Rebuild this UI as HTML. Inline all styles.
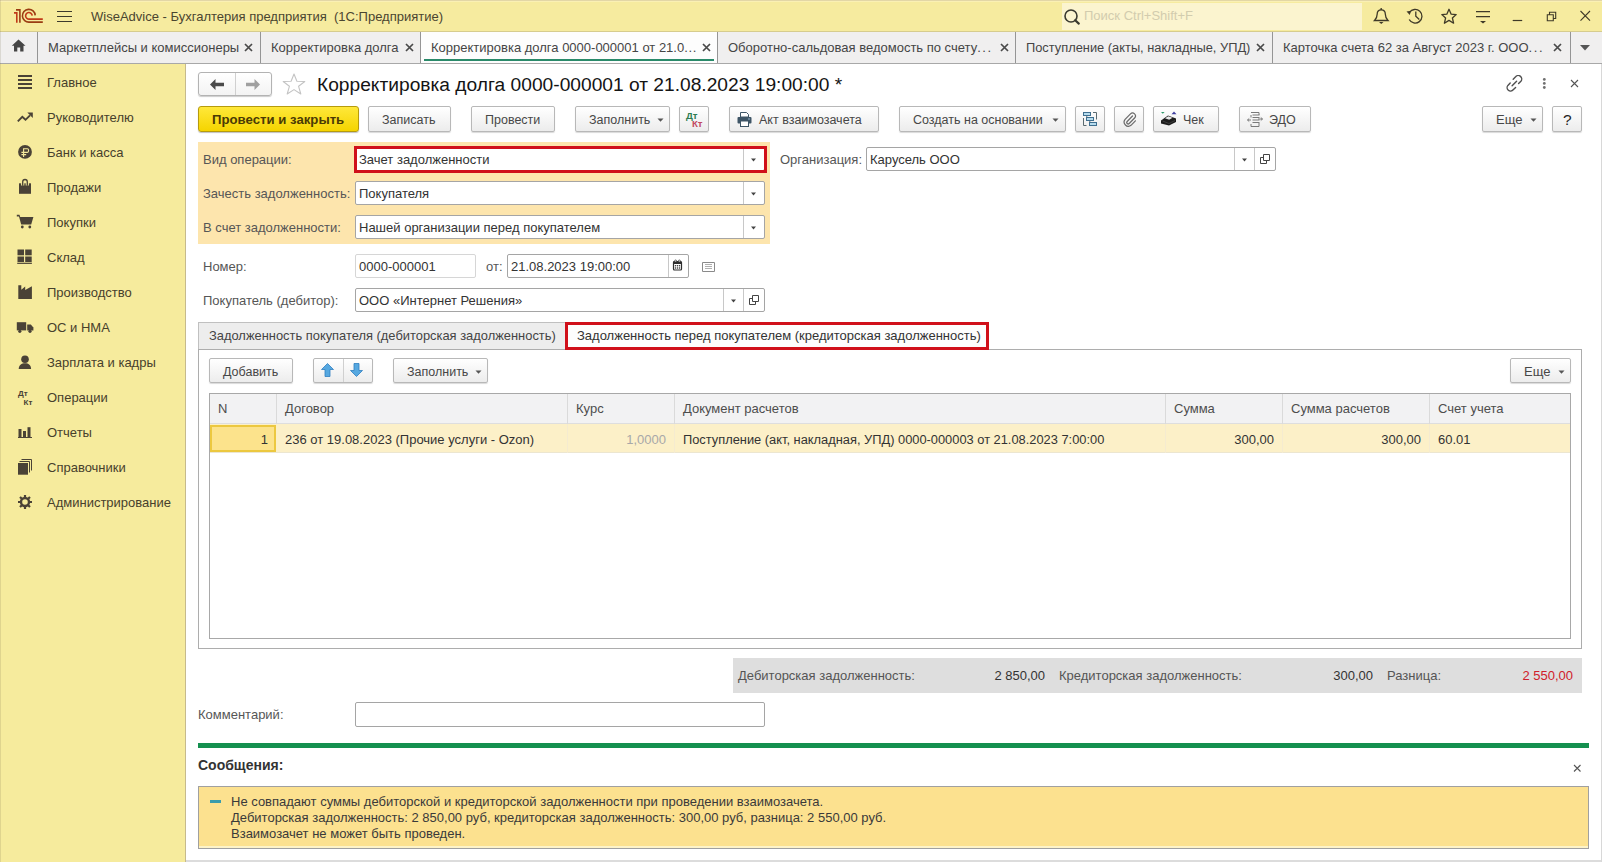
<!DOCTYPE html>
<html><head><meta charset="utf-8">
<style>
*{box-sizing:border-box;margin:0;padding:0}
html,body{width:1602px;height:862px;overflow:hidden;background:#fff;font-family:"Liberation Sans",sans-serif;font-size:13px;color:#4d4d4d}
.a{position:absolute}
.t{position:absolute;white-space:pre;line-height:16px}
#top{left:0;top:0;width:1602px;height:32px;background:#f6eb9f;border-bottom:1px solid #d6cc8e}
#tabs{left:0;top:32px;width:1602px;height:32px;background:#f0efef;border-bottom:1px solid #a8a8a8}
.tab{position:absolute;top:0;height:31px;border-right:1px solid #959595}
.tab .t{top:8px;color:#454545}
.tab .x{position:absolute;top:8px;font-size:14px;color:#555;font-weight:bold}
#side{left:0;top:64px;width:186px;height:798px;background:#f6eb9d;border-right:1px solid #c6ba8c}
.si{position:absolute;left:47px;color:#47402c}
#main{left:186px;top:64px;width:1416px;height:798px;background:#fff}
.btn{position:absolute;height:25px;border:1px solid #b8b8b8;border-radius:2px;background:linear-gradient(#ffffff,#ececec);box-shadow:0 1px 1px rgba(0,0,0,.15)}
.btn .t{top:5px;color:#474747;font-size:12.5px}
.fld{position:absolute;height:24px;border:1px solid #a5a5a5;border-radius:2px;background:#fff}
.fld .t{top:4px;left:3px;color:#333}
.dd{position:absolute;top:0;width:1px;height:22px;background:#c8c8c8}
.lbl{position:absolute;white-space:pre;color:#565656;line-height:16px}
</style></head><body>
<!-- TOP BAR -->
<div id="top" class="a">
  <svg class="a" style="left:0;top:0" width="50" height="31" viewBox="0 0 50 31">
    <g fill="none" stroke-width="1.6" stroke-linecap="butt">
      <path d="M14 12.9 H16.8 V22.8" stroke="#c03a18"/>
      <path d="M16 9.9 H19.9 V22.8" stroke="#9a3c12"/>
      <path d="M35.2 15.4 A6.4 6.4 0 1 0 29.4 22.1 H42.8" stroke="#9a3c12"/>
      <path d="M32.2 15.6 A3.3 3.3 0 1 0 29.4 19.1 H42.8" stroke="#c03a18"/>
    </g>
  </svg>
  <svg class="a" style="left:57px;top:10px" width="15" height="13" viewBox="0 0 15 13"><g stroke="#3d3a2c" stroke-width="1.1"><path d="M0 1.5H15M0 6.5H15M0 11.5H15"/></g></svg>
  <div class="t" style="left:91px;top:9px;color:#4a4530;font-size:13px">WiseAdvice - Бухгалтерия предприятия  (1С:Предприятие)</div>
  <div class="a" style="left:1062px;top:3px;width:300px;height:27px;background:#fbf4cf"></div>
  <svg class="a" style="left:1063px;top:7px" width="19" height="19" viewBox="0 0 19 19"><circle cx="8" cy="9" r="6" fill="none" stroke="#3a3a30" stroke-width="1.6"/><path d="M12.2 13.2 L15.8 16.6" stroke="#3a3a30" stroke-width="2.2" stroke-linecap="round"/></svg>
  <div class="t" style="left:1084px;top:8px;color:#d2ccae">Поиск Ctrl+Shift+F</div>
  <svg class="a" style="left:1366px;top:2px" width="236" height="28" viewBox="1366 2 236 28">
   <g fill="none" stroke="#3f3a28" stroke-width="1.3">
    <path d="M1374.5 20.5 H1388 C1386 18.5 1385.3 17 1385.3 14 C1385.3 11 1383.8 9.8 1381.2 9.8 C1378.6 9.8 1377.2 11 1377.2 14 C1377.2 17 1376.5 18.5 1374.5 20.5 Z"/>
    <path d="M1409.5 12.5 A6.8 6.8 0 1 1 1409.2 19.5"/>
    <path d="M1415.8 11.5 V16.2 L1419.3 19.5"/>
    <path d="M1449 9.3 L1451.2 14.2 L1456.2 14.6 L1452.4 18 L1453.6 23.2 L1449 20.4 L1444.4 23.2 L1445.6 18 L1441.8 14.6 L1446.8 14.2 Z" stroke-linejoin="round"/>
    <path d="M1476 11.6 H1490 M1476 16.6 H1490"/>
    <path d="M1512.7 20.5 H1522.2" stroke-width="1.2"/>
    <path d="M1547.3 14.7 H1553.3 V20.7 H1547.3 Z M1549.5 14.7 V12.3 H1555.7 V18.5 H1553.3" stroke-width="1.1"/>
    <path d="M1580.5 11 L1590 20.7 M1590 11 L1580.5 20.7" stroke-width="1.1"/>
   </g>
   <g fill="#3f3a28">
    <path d="M1379 22 H1383.5 L1381.25 24 Z"/>
    <path d="M1406.5 11.5 L1411 10.8 L1409.8 15 Z"/>
    <path d="M1480 21 H1486 L1483 23.5 Z"/>
    <circle cx="1381.2" cy="9" r="0.9"/>
   </g>
  </svg>
</div>
<div class="a" style="left:0;top:0;width:1602px;height:1px;background:#e2d6a6"></div>
<div class="a" style="left:0;top:1px;width:1602px;height:1px;background:#faf0b4"></div>
<!-- TABS -->
<div id="tabs" class="a">
  <div class="tab" style="left:0;width:38px">
    <svg class="a" style="left:11px;top:7px" width="16" height="14" viewBox="0 0 16 14"><path d="M7.5 0.5 L14.5 6.8 H12.5 V12.5 H9.2 V8.5 H6.3 V12.5 H3 V6.8 H0.8 Z" fill="#454545"/></svg>
  </div>
  <div class="tab" style="left:38px;width:223px"><div class="t" style="left:10px">Маркетплейсы и комиссионеры</div><svg class="a" style="left:206px;top:11px" width="9" height="9" viewBox="0 0 9 9"><path d="M1 1 L8 8 M8 1 L1 8" stroke="#4a4a4a" stroke-width="1.7"/></svg></div>
  <div class="tab" style="left:261px;width:160px"><div class="t" style="left:10px">Корректировка долга</div><svg class="a" style="left:144px;top:11px" width="9" height="9" viewBox="0 0 9 9"><path d="M1 1 L8 8 M8 1 L1 8" stroke="#4a4a4a" stroke-width="1.7"/></svg></div>
  <div class="tab" style="left:421px;width:297px;background:#fdfdfd;height:31px"><div class="t" style="left:10px">Корректировка долга 0000-000001 от 21.0<span style="letter-spacing:0.6px">...</span></div><svg class="a" style="left:281px;top:11px" width="9" height="9" viewBox="0 0 9 9"><path d="M1 1 L8 8 M8 1 L1 8" stroke="#4a4a4a" stroke-width="1.7"/></svg><div class="a" style="left:3px;top:27px;width:290px;height:2px;background:#2a8a6a"></div></div>
  <div class="tab" style="left:718px;width:298px"><div class="t" style="left:10px">Оборотно-сальдовая ведомость по счету<span style="letter-spacing:1.6px">...</span></div><svg class="a" style="left:282px;top:11px" width="9" height="9" viewBox="0 0 9 9"><path d="M1 1 L8 8 M8 1 L1 8" stroke="#4a4a4a" stroke-width="1.7"/></svg></div>
  <div class="tab" style="left:1016px;width:257px"><div class="t" style="left:10px;font-size:12.85px">Поступление (акты, накладные, УПД)</div><svg class="a" style="left:240px;top:11px" width="9" height="9" viewBox="0 0 9 9"><path d="M1 1 L8 8 M8 1 L1 8" stroke="#4a4a4a" stroke-width="1.7"/></svg></div>
  <div class="tab" style="left:1273px;width:298px"><div class="t" style="left:10px">Карточка счета 62 за Август 2023 г. ООО<span style="letter-spacing:1.6px">...</span></div><svg class="a" style="left:280px;top:11px" width="9" height="9" viewBox="0 0 9 9"><path d="M1 1 L8 8 M8 1 L1 8" stroke="#4a4a4a" stroke-width="1.7"/></svg></div>
  <svg class="a" style="left:1580px;top:13px" width="10" height="6" viewBox="0 0 10 6"><path d="M0 0H10L5 5.5Z" fill="#555"/></svg>
</div>
<!-- SIDEBAR -->
<div id="side" class="a">
  <div class="t si" style="top:11px">Главное</div>
  <div class="t si" style="top:46px">Руководителю</div>
  <div class="t si" style="top:81px">Банк и касса</div>
  <div class="t si" style="top:116px">Продажи</div>
  <div class="t si" style="top:151px">Покупки</div>
  <div class="t si" style="top:186px">Склад</div>
  <div class="t si" style="top:221px">Производство</div>
  <div class="t si" style="top:256px">ОС и НМА</div>
  <div class="t si" style="top:291px">Зарплата и кадры</div>
  <div class="t si" style="top:326px">Операции</div>
  <div class="t si" style="top:361px">Отчеты</div>
  <div class="t si" style="top:396px">Справочники</div>
  <div class="t si" style="top:431px">Администрирование</div>
</div>
<!-- SIDE ICONS -->
<svg class="a" style="left:0;top:0" width="40" height="520" viewBox="0 0 40 520">
<g fill="#4a4236">
  <rect x="18" y="75" width="14" height="2"/><rect x="18" y="79" width="14" height="2"/><rect x="18" y="83" width="14" height="2"/><rect x="18" y="87" width="14" height="2"/>
  <path d="M17.8 121.3 L22.3 116.8 L25.5 119.8 L30 115.3" fill="none" stroke="#4a4236" stroke-width="1.9"/><path d="M27.3 112.6 H32.8 V118.1 Z"/>
  <circle cx="25" cy="151.9" r="6.9"/>
  <path d="M19 183.3 H31 V193.8 H19 Z"/>
  <path d="M16.8 214.7 H19.5 L20.2 217 H33.4 L31.2 224.5 H21.2 L19 216.5 H16.8 Z"/>
  <circle cx="22.3" cy="227" r="1.4"/><circle cx="29.8" cy="227" r="1.4"/>
  <rect x="17.5" y="249.5" width="6.5" height="5.8"/><rect x="25.2" y="249.5" width="6.5" height="5.8"/><rect x="17.5" y="256.5" width="6.5" height="5.5"/><rect x="25.2" y="256.5" width="6.5" height="5.5"/><rect x="17.2" y="262.7" width="14.7" height="1.2"/>
  <path d="M18.3 298.9 V285.3 H21.3 V289.8 L25.2 286.5 V290 L31.9 286.3 V298.9 Z"/>
  <rect x="16.8" y="322.2" width="9.4" height="8.2"/><path d="M27.2 324.5 H30.8 L33.4 327.5 V330.4 H27.2 Z"/>
  <circle cx="19.8" cy="331.3" r="1.6"/><circle cx="30" cy="331.3" r="1.6"/>
  <circle cx="25" cy="359.2" r="3.8"/><path d="M18.7 369 C18.7 365 21.5 363.2 25 363.2 C28.5 363.2 31.1 365 31.1 369 Z"/>
  <rect x="18.5" y="429" width="3" height="8.5"/><rect x="23" y="431" width="3" height="6.5"/><rect x="27.5" y="427.2" width="3" height="10.3"/><rect x="18" y="437" width="14" height="1"/>
  <rect x="18" y="463" width="10" height="11.7"/>
  <path d="M19.5 461.5 H29.5 V472.5" fill="none" stroke="#4a4236" stroke-width="1"/>
  <path d="M21.5 459.5 H31.5 V470.5" fill="none" stroke="#4a4236" stroke-width="1"/>
</g>
<g fill="none" stroke="#4a4236">
  <path d="M23.6 157 V148.8 H27.4 Q28.6 148.8 28.6 150.6 Q28.6 152.4 27.4 152.4 H21.4 M21.4 154.6 H26.2" stroke="#f6eb9d" stroke-width="1.1"/>
  <path d="M22.7 185.5 V181.8 A2.3 2.3 0 0 1 27.3 181.8 V185.5" stroke="#f6eb9d" stroke-width="3.2"/><path d="M22.7 185.8 V181.8 A2.3 2.3 0 0 1 27.3 181.8 V185.8" stroke-width="1.3"/>
  <circle cx="25" cy="502" r="4" stroke-width="2.4"/>
  <g stroke-width="2.2"><path d="M25 495 V497.5 M25 506.5 V509 M18 502 H20.5 M29.5 502 H32 M20 497 L21.8 498.8 M28.2 505.2 L30 507 M30 497 L28.2 498.8 M21.8 505.2 L20 507"/></g>
</g>
<text x="18" y="396" font-family="Liberation Sans" font-weight="bold" font-size="8" fill="#4a4236">Дт</text>
<text x="23.5" y="404.5" font-family="Liberation Sans" font-weight="bold" font-size="8" fill="#4a4236">Кт</text>
</svg>
<!-- MAIN -->
<div id="main" class="a"></div>
<!-- NAV -->
<div class="a" style="left:198px;top:72px;width:74px;height:24px;border:1px solid #b3b3b3;border-radius:3px;background:linear-gradient(#fff,#f3f3f3);box-shadow:0 1px 1px rgba(0,0,0,.2)"></div>
<div class="a" style="left:235px;top:73px;width:1px;height:22px;background:#d0d0d0"></div>
<svg class="a" style="left:210px;top:79px" width="14" height="11" viewBox="0 0 14 11"><path d="M0 5.5 L5.5 0 V3.8 H14 V7.2 H5.5 V11 Z" fill="#4a4a4a"/></svg>
<svg class="a" style="left:246px;top:79px" width="14" height="11" viewBox="0 0 14 11"><path d="M14 5.5 L8.5 0 V3.8 H0 V7.2 H8.5 V11 Z" fill="#a0a0a0"/></svg>
<svg class="a" style="left:282px;top:73px" width="24" height="22" viewBox="0 0 24 22"><path d="M12 1 L14.9 8.3 L22.8 8.5 L16.6 13.3 L18.8 21 L12 16.6 L5.2 21 L7.4 13.3 L1.2 8.5 L9.1 8.3 Z" fill="none" stroke="#c4c4c4" stroke-width="1.1" stroke-linejoin="round"/></svg>
<div class="t" style="left:317px;top:74px;font-size:19.2px;line-height:22px;color:#141414">Корректировка долга 0000-000001 от 21.08.2023 19:00:00 *</div>
<svg class="a" style="left:1506px;top:75px" width="17" height="17" viewBox="0 0 17 17"><g fill="none" stroke="#505050" stroke-width="1.4" stroke-linecap="round"><path d="M7.2 4.2 L9.6 1.8 A2.9 2.9 0 0 1 14.9 6.2 L12.6 8.5"/><path d="M9.6 12.4 L7.2 14.8 A2.9 2.9 0 0 1 1.9 10.4 L4.2 8.1"/><path d="M6.1 10.7 L10.6 6.2"/></g></svg>
<svg class="a" style="left:1541px;top:77px" width="6" height="13" viewBox="0 0 6 13"><g fill="#707070"><circle cx="3.3" cy="2.4" r="1.4"/><circle cx="3.3" cy="6.4" r="1.4"/><circle cx="3.3" cy="10.5" r="1.4"/></g></svg>
<svg class="a" style="left:1570px;top:79px" width="9" height="9" viewBox="0 0 9 9"><path d="M1 1 L8 8 M8 1 L1 8" stroke="#555" stroke-width="1.1"/></svg>
<!-- TOOLBAR -->
<div class="a" style="left:198px;top:106px;width:161px;height:26px;border:1px solid #b69b0c;border-radius:3px;background:linear-gradient(#ffe83a,#f5d400);box-shadow:0 1px 1px rgba(0,0,0,.25)"></div>
<div class="t" style="left:212px;top:112px;font-weight:bold;font-size:13.2px;color:#4a3a05">Провести и закрыть</div>
<div class="btn" style="left:368px;top:106px;height:26px;width:83px"><div class="t" style="left:13px">Записать</div></div>
<div class="btn" style="left:471px;top:106px;height:26px;width:84px"><div class="t" style="left:13px">Провести</div></div>
<div class="btn" style="left:575px;top:106px;height:26px;width:95px"><div class="t" style="left:13px">Заполнить</div><svg class="a" style="left:81px;top:11px" width="7" height="4" viewBox="0 0 7 4"><path d="M0.5 0.5H6.5L3.5 3.8Z" fill="#555"/></svg></div>
<div class="btn" style="left:679px;top:106px;height:26px;width:30px"><div class="a" style="left:6px;top:4px;font-size:9.6px;font-weight:bold;color:#2f7d52;line-height:10px">Дт</div><div class="a" style="left:12px;top:12px;font-size:9.6px;font-weight:bold;color:#c24a62;line-height:10px">Кт</div></div>
<div class="btn" style="left:729px;top:106px;height:26px;width:150px">
  <svg class="a" style="left:7px;top:5px" width="15" height="15" viewBox="0 0 15 15"><path d="M3.5 0.5 H9.5 L11.5 2.5 V5 H3.5 Z" fill="#fff" stroke="#3e5566" stroke-width="1"/><rect x="0.5" y="5" width="14" height="6.5" rx="1" fill="#3e5566"/><rect x="3.5" y="9" width="8" height="5.5" fill="#fff" stroke="#3e5566" stroke-width="1"/><rect x="11" y="6.5" width="2" height="1" fill="#8fb0c8"/></svg>
  <div class="t" style="left:29px">Акт взаимозачета</div></div>
<div class="btn" style="left:899px;top:106px;height:26px;width:167px"><div class="t" style="left:13px">Создать на основании</div><svg class="a" style="left:152px;top:11px" width="7" height="4" viewBox="0 0 7 4"><path d="M0.5 0.5H6.5L3.5 3.8Z" fill="#555"/></svg></div>
<div class="btn" style="left:1075px;top:106px;height:26px;width:30px">
  <svg class="a" style="left:7px;top:5px" width="15" height="15" viewBox="0 0 15 15"><g fill="none" stroke="#5a6a70" stroke-width="1"><path d="M0.5 6 V13.5 H3.5"/><path d="M10 0.5 H13.5 V7.5"/><path d="M3.8 4 V5.5 M6.8 9 V10.5"/></g><g fill="#b6dcee" stroke="#3f6f90" stroke-width="1"><rect x="0.5" y="0.5" width="7" height="3"/><rect x="3.5" y="5.5" width="7" height="3"/><rect x="6.5" y="10.5" width="7" height="3"/></g></svg></div>
<div class="btn" style="left:1114px;top:106px;height:26px;width:30px">
  <svg class="a" style="left:8px;top:5px" width="14" height="15" viewBox="0 0 14 15"><path d="M9.5 4 L4.2 9.5 A1.4 1.4 0 0 0 6.2 11.5 L11.6 6 A2.9 2.9 0 0 0 7.5 1.9 L2.1 7.4 A4.2 4.2 0 0 0 8 13.3 L12.4 8.8" fill="none" stroke="#6a6a6a" stroke-width="1.2" stroke-linecap="round"/></svg></div>
<div class="btn" style="left:1153px;top:106px;height:26px;width:66px">
  <svg class="a" style="left:6px;top:4px" width="18" height="15" viewBox="0 0 18 15"><path d="M1 1 H4.6 L2.8 2.8 Z" fill="#2a9a6a"/><path d="M11.5 3.2 H16.5 L14 0.5 Z" fill="#4040a0"/><path d="M1 9.5 L8 4.5 L16 7.5 V11 L9 14.5 L1 12.5 Z" fill="#1c1c1c"/><path d="M5 7.2 L8.3 5.2 L12.5 6.8 L9.2 8.8 Z" fill="#e8e8e8"/><path d="M2.5 10 L9 12.5 L15 9.5" stroke="#555" stroke-width="0.6" fill="none"/></svg>
  <div class="t" style="left:29px">Чек</div></div>
<div class="btn" style="left:1239px;top:106px;height:26px;width:72px">
  <svg class="a" style="left:7px;top:5px" width="16" height="16" viewBox="0 0 16 16"><g fill="none" stroke="#7a7a7a" stroke-width="1"><path d="M4 0.5 H12 V3 M12 11 V14.5 H4 V12"/><path d="M4 3 V5.5"/><path d="M5.5 3H12.5M5.5 5.5H12.5M5.5 8H12.5M5.5 10.5H12.5"/><path d="M0.5 8 H4 M2.2 6.5 L0.5 8 L2.2 9.5"/><path d="M11 7 H15.5 M13.8 5.5 L15.5 7 L13.8 8.5"/></g></svg>
  <div class="t" style="left:29px">ЭДО</div></div>
<div class="btn" style="left:1482px;top:106px;height:26px;width:61px"><div class="t" style="left:13px;font-size:13px">Еще</div><svg class="a" style="left:47px;top:11px" width="7" height="4" viewBox="0 0 7 4"><path d="M0.5 0.5H6.5L3.5 3.8Z" fill="#555"/></svg></div>
<div class="btn" style="left:1552px;top:106px;height:26px;width:30px"><div class="t" style="left:10px;top:4px;font-size:15.5px;line-height:18px;color:#222">?</div></div>

<!-- FORM -->
<div class="a" style="left:198px;top:142px;width:572px;height:102px;background:#fde5ad"></div>
<div class="lbl" style="left:203px;top:152px">Вид операции:</div>
<div class="lbl" style="left:203px;top:186px">Зачесть задолженность:</div>
<div class="lbl" style="left:203px;top:220px">В счет задолженности:</div>
<div class="fld" style="left:355px;top:147px;width:410px"><div class="t">Зачет задолженности</div><div class="dd" style="left:387px"></div><svg class="a" style="left:394px;top:10px" width="7" height="4" viewBox="0 0 7 4"><path d="M1 0.5H6L3.5 3.5Z" fill="#444"/></svg></div>
<div class="a" style="left:354px;top:146px;width:413px;height:27px;border:3px solid #d0101a"></div>
<div class="fld" style="left:355px;top:181px;width:410px"><div class="t">Покупателя</div><div class="dd" style="left:387px"></div><svg class="a" style="left:394px;top:10px" width="7" height="4" viewBox="0 0 7 4"><path d="M1 0.5H6L3.5 3.5Z" fill="#444"/></svg></div>
<div class="fld" style="left:355px;top:215px;width:410px"><div class="t">Нашей организации перед покупателем</div><div class="dd" style="left:387px"></div><svg class="a" style="left:394px;top:10px" width="7" height="4" viewBox="0 0 7 4"><path d="M1 0.5H6L3.5 3.5Z" fill="#444"/></svg></div>
<div class="lbl" style="left:780px;top:152px">Организация:</div>
<div class="fld" style="left:866px;top:147px;width:410px"><div class="t">Карусель ООО</div><div class="dd" style="left:367px"></div><div class="dd" style="left:387px"></div><svg class="a" style="left:374px;top:10px" width="7" height="4" viewBox="0 0 7 4"><path d="M1 0.5H6L3.5 3.5Z" fill="#444"/></svg>
  <svg class="a" style="left:393px;top:6px" width="10" height="10" viewBox="0 0 10 10"><g fill="none" stroke="#444" stroke-width="1"><path d="M3.5 0.5 H9.5 V6.5 H3.5 Z"/><path d="M3.5 3.5 H0.5 V9.5 H6.5 V6.5"/></g></svg></div>
<div class="lbl" style="left:203px;top:259px">Номер:</div>
<div class="fld" style="left:355px;top:254px;width:121px;border-color:#d6d6d6"><div class="t">0000-000001</div></div>
<div class="lbl" style="left:486px;top:259px">от:</div>
<div class="fld" style="left:507px;top:254px;width:182px"><div class="t">21.08.2023 19:00:00</div><div class="dd" style="left:160px"></div>
  <svg class="a" style="left:164px;top:4px" width="11" height="12" viewBox="0 0 11 12"><rect x="1.5" y="2.5" width="8" height="8.5" rx="1" fill="#fff" stroke="#2e2e2e" stroke-width="1.2"/><rect x="1.5" y="2.5" width="8" height="2.5" fill="#2e2e2e"/><circle cx="3.6" cy="2" r="1" fill="#fff" stroke="#2e2e2e" stroke-width=".7"/><circle cx="7.4" cy="2" r="1" fill="#fff" stroke="#2e2e2e" stroke-width=".7"/><g fill="#2e2e2e"><circle cx="3.5" cy="6.8" r=".75"/><circle cx="5.5" cy="6.8" r=".75"/><circle cx="7.5" cy="6.8" r=".75"/><circle cx="3.5" cy="8.9" r=".75"/><circle cx="5.5" cy="8.9" r=".75"/><circle cx="7.5" cy="8.9" r=".75"/></g></svg></div>
<svg class="a" style="left:702px;top:262px" width="13" height="10" viewBox="0 0 13 10"><path d="M0.5 0.5 H12.5 V9.5 H0.5 Z" fill="#fff" stroke="#8a8a8a" stroke-width="1"/><path d="M3 2.5H10M3 4.5H10M3 6.5H10" stroke="#b0b0b0" stroke-width="1"/></svg>
<div class="lbl" style="left:203px;top:293px">Покупатель (дебитор):</div>
<div class="fld" style="left:355px;top:288px;width:410px"><div class="t">ООО «Интернет Решения»</div><div class="dd" style="left:367px"></div><div class="dd" style="left:387px"></div><svg class="a" style="left:374px;top:10px" width="7" height="4" viewBox="0 0 7 4"><path d="M1 0.5H6L3.5 3.5Z" fill="#444"/></svg>
  <svg class="a" style="left:393px;top:6px" width="10" height="10" viewBox="0 0 10 10"><g fill="none" stroke="#444" stroke-width="1"><path d="M3.5 0.5 H9.5 V6.5 H3.5 Z"/><path d="M3.5 3.5 H0.5 V9.5 H6.5 V6.5"/></g></svg></div>
<!-- PAGES -->
<div class="a" style="left:198px;top:349px;width:1384px;height:300px;border:1px solid #adadad"></div>
<div class="a" style="left:198px;top:322px;width:368px;height:27px;background:#ededed;border:1px solid #c0c0c0;border-bottom:none"></div>
<div class="t" style="left:209px;top:328px;color:#444;font-size:12.9px">Задолженность покупателя (дебиторская задолженность)</div>
<div class="a" style="left:566px;top:323px;width:422px;height:27px;background:#fdfdfd"></div>
<div class="t" style="left:577px;top:328px;color:#333">Задолженность перед покупателем (кредиторская задолженность)</div>
<div class="a" style="left:565px;top:322px;width:424px;height:28px;border:3px solid #d0101a"></div>
<div class="btn" style="left:209px;top:358px;width:84px"><div class="t" style="left:13px">Добавить</div></div>
<div class="btn" style="left:313px;top:358px;width:60px"></div>
<div class="a" style="left:343px;top:359px;width:1px;height:23px;background:#d0d0d0"></div>
<svg class="a" style="left:321px;top:363px" width="13" height="14" viewBox="0 0 13 14"><path d="M6.5 0.5 L12.5 6.5 H9 V13.5 H4 V6.5 H0.5 Z" fill="#56a8e0" stroke="#2f7fc0" stroke-width="0.8"/></svg>
<svg class="a" style="left:350px;top:363px" width="13" height="14" viewBox="0 0 13 14"><path d="M6.5 13.5 L12.5 7.5 H9 V0.5 H4 V7.5 H0.5 Z" fill="#56a8e0" stroke="#2f7fc0" stroke-width="0.8"/></svg>
<div class="btn" style="left:393px;top:358px;width:95px"><div class="t" style="left:13px">Заполнить</div><svg class="a" style="left:81px;top:11px" width="7" height="4" viewBox="0 0 7 4"><path d="M0.5 0.5H6.5L3.5 3.8Z" fill="#555"/></svg></div>
<div class="btn" style="left:1510px;top:358px;width:61px"><div class="t" style="left:13px;font-size:13px">Еще</div><svg class="a" style="left:47px;top:11px" width="7" height="4" viewBox="0 0 7 4"><path d="M0.5 0.5H6.5L3.5 3.8Z" fill="#555"/></svg></div>
<!-- TABLE -->
<div class="a" style="left:209px;top:393px;width:1362px;height:246px;border:1px solid #a8a8a8;background:#fff"></div>
<div class="a" style="left:210px;top:394px;width:1360px;height:30px;background:#f2f2f3;border-bottom:1px solid #dedede"></div>
<div class="a" style="left:276px;top:394px;width:1px;height:30px;background:#dadada"></div>
<div class="a" style="left:567px;top:394px;width:1px;height:30px;background:#dadada"></div>
<div class="a" style="left:674px;top:394px;width:1px;height:30px;background:#dadada"></div>
<div class="a" style="left:1165px;top:394px;width:1px;height:30px;background:#dadada"></div>
<div class="a" style="left:1282px;top:394px;width:1px;height:30px;background:#dadada"></div>
<div class="a" style="left:1429px;top:394px;width:1px;height:30px;background:#dadada"></div>
<div class="t" style="left:218px;top:401px;color:#4d4d4d">N</div>
<div class="t" style="left:285px;top:401px;color:#4d4d4d">Договор</div>
<div class="t" style="left:576px;top:401px;color:#4d4d4d">Курс</div>
<div class="t" style="left:683px;top:401px;color:#4d4d4d">Документ расчетов</div>
<div class="t" style="left:1174px;top:401px;color:#4d4d4d">Сумма</div>
<div class="t" style="left:1291px;top:401px;color:#4d4d4d">Сумма расчетов</div>
<div class="t" style="left:1438px;top:401px;color:#4d4d4d">Счет учета</div>
<div class="a" style="left:210px;top:424px;width:1360px;height:29px;background:#fcf0c8;border-bottom:1px solid #ece6d0"></div>
<div class="a" style="left:210px;top:425px;width:66px;height:27px;background:#fce38c;border:2px solid #ecc840"></div>
<div class="a" style="left:567px;top:424px;width:1px;height:29px;background:#f5ebd0"></div>
<div class="a" style="left:674px;top:424px;width:1px;height:29px;background:#f5ebd0"></div>
<div class="a" style="left:1165px;top:424px;width:1px;height:29px;background:#f5ebd0"></div>
<div class="a" style="left:1282px;top:424px;width:1px;height:29px;background:#f5ebd0"></div>
<div class="a" style="left:1429px;top:424px;width:1px;height:29px;background:#f5ebd0"></div>
<div class="t" style="left:210px;top:432px;width:58px;text-align:right;color:#333">1</div>
<div class="t" style="left:285px;top:432px;color:#333">236 от 19.08.2023 (Прочие услуги - Ozon)</div>
<div class="t" style="left:568px;top:432px;width:98px;text-align:right;color:#a8a8a8">1,0000</div>
<div class="t" style="left:683px;top:432px;color:#333;font-size:12.85px">Поступление (акт, накладная, УПД) 0000-000003 от 21.08.2023 7:00:00</div>
<div class="t" style="left:1166px;top:432px;width:108px;text-align:right;color:#333">300,00</div>
<div class="t" style="left:1283px;top:432px;width:138px;text-align:right;color:#333">300,00</div>
<div class="t" style="left:1438px;top:432px;color:#333">60.01</div>
<!-- SUMMARY -->
<div class="a" style="left:733px;top:658px;width:849px;height:35px;background:#dedede"></div>
<div class="t" style="left:738px;top:668px;color:#555">Дебиторская задолженность:</div>
<div class="t" style="left:944px;top:668px;width:101px;text-align:right;color:#333">2 850,00</div>
<div class="t" style="left:1059px;top:668px;color:#555">Кредиторская задолженность:</div>
<div class="t" style="left:1272px;top:668px;width:101px;text-align:right;color:#333">300,00</div>
<div class="t" style="left:1387px;top:668px;color:#555">Разница:</div>
<div class="t" style="left:1472px;top:668px;width:101px;text-align:right;color:#d0202a">2 550,00</div>
<!-- COMMENT -->
<div class="lbl" style="left:198px;top:707px">Комментарий:</div>
<div class="fld" style="left:355px;top:702px;width:410px;height:25px"></div>
<!-- MESSAGES -->
<div class="a" style="left:198px;top:743px;width:1391px;height:5px;background:#14904f"></div>
<div class="t" style="left:198px;top:757px;font-weight:bold;font-size:14px;color:#333">Сообщения:</div>
<svg class="a" style="left:1573px;top:764px" width="9" height="9" viewBox="0 0 9 9"><path d="M1 1 L7.5 7.5 M7.5 1 L1 7.5" stroke="#555" stroke-width="1.1"/></svg>
<div class="a" style="left:198px;top:786px;width:1391px;height:63px;background:#fce18f;border:1px solid #a0a0a0;box-shadow:inset 0 -2px 0 #fdf3c8"></div>
<div class="a" style="left:210px;top:800px;width:11px;height:2.5px;background:#3a9cac"></div>
<div class="t" style="left:231px;top:794px;color:#3a3a3a">Не совпадают суммы дебиторской и кредиторской задолженности при проведении взаимозачета.
Дебиторская задолженность: 2 850,00 руб, кредиторская задолженность: 300,00 руб, разница: 2 550,00 руб.
Взаимозачет не может быть проведен.</div>
<div class="a" style="left:186px;top:860px;width:1416px;height:2px;background:#dcdcdc"></div>
<div class="a" style="left:1601px;top:64px;width:1px;height:798px;background:#d8d8d8"></div>
<div class="a" style="left:0;top:0;width:1px;height:862px;background:rgba(120,110,80,.18)"></div>
</body></html>
